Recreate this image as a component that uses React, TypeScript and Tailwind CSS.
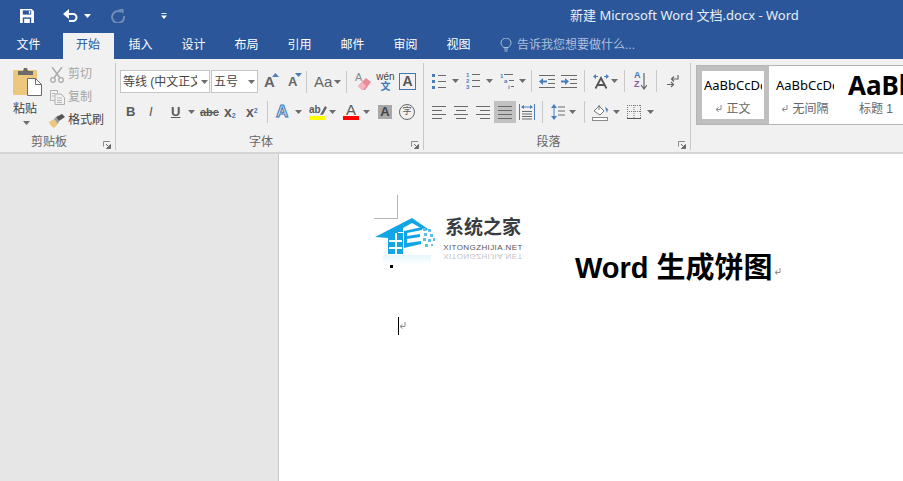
const blue = "#2b579a"

function Caret({ className = "" }: { className?: string }) {
  return (
    <svg width="7" height="4" viewBox="0 0 7 4" className={`shrink-0 ${className}`}>
      <path d="M0 0h7L3.500 4z" fill="#6d6d6d" />
    </svg>
  )
}

function Sep({ className = "" }: { className?: string }) {
  return <div className={`w-px shrink-0 bg-[#c8c8c8] ${className}`} />
}

function Launcher() {
  return (
    <svg width="8" height="8" viewBox="0 0 8 8" className="mr-[4px] ml-[5px] mb-[1px] shrink-0">
      <path d="M.5 5.500V.5H7" fill="none" stroke="#8a8a8a" />
      <path d="M3 3l3 3M7.500 3.500v4h-4z" stroke="#6b6b6b" fill="#6b6b6b" strokeWidth="1" />
    </svg>
  )
}

function Group({ label, className, children }: { label: string; className: string; children: React.ReactNode }) {
  return (
    <div className={`flex shrink-0 flex-col border-r border-[#c8c8c8] mt-[4px] mb-[2px] ${className}`}>
      <div className="flex-1 min-h-0">{children}</div>
      <div className="flex h-[16px] items-end">
        <div className="flex-1 text-center text-[12px] leading-[16px] text-[#666]">{label}</div>
        <Launcher />
      </div>
    </div>
  )
}

function Lines({ rows, className = "" }: { rows: [number, number][]; className?: string }) {
  return (
    <svg width="14" height="14" viewBox="0 0 14 14" className={`shrink-0 ${className}`}>
      {rows.map(([a, b], i) => (
        <rect key={i} x={a} y={i * 4 + 1} width={b - a} height="1" fill="#6a6a6a" />
      ))}
    </svg>
  )
}

function Save() {
  return (
    <svg width="14" height="14" viewBox="0 0 15 15" className="ml-[20px] shrink-0">
      <path d="M0 0h12.500L15 2.500V15H0z" fill="#fff" />
      <rect x="3" y="1.500" width="9" height="4.500" fill={blue} />
      <rect x="9.500" y="2" width="1.500" height="3" fill="#fff" />
      <rect x="3" y="9" width="9" height="6" fill={blue} />
      <rect x="4.500" y="10.500" width="6" height="4.500" fill="#fff" />
    </svg>
  )
}

function Undo() {
  return (
    <svg width="15" height="13" viewBox="0 0 15 13" className="ml-[29px] shrink-0">
      <path d="M2 5h8a3.500 3.500 0 0 1 0 7H6" fill="none" stroke="#fff" strokeWidth="2" />
      <path d="M6 0v10L0 5z" fill="#fff" />
    </svg>
  )
}

function Redo() {
  return (
    <svg width="14" height="14" viewBox="0 0 14 14" className="ml-[20px] shrink-0">
      <path d="M10 2.800A6 6 0 1 0 13 7" fill="none" stroke="#6f8bb8" strokeWidth="2" />
      <path d="M7.500 0h5v5z" fill="#6f8bb8" />
    </svg>
  )
}

function Customize() {
  return (
    <svg width="6" height="6" viewBox="0 0 7 7" className="ml-[36px] shrink-0">
      <rect x="0.500" y="0" width="6" height="1" fill="#fff" />
      <path d="M0 3h7L3.500 7z" fill="#fff" />
    </svg>
  )
}

function Bulb() {
  return (
    <svg width="12" height="14" viewBox="0 0 12 14" className="shrink-0">
      <path d="M3.500 9.500C2.500 8 1 7 1 5a5 5 0 0 1 10 0c0 2-1.500 3-2.500 4.500z" fill="none" stroke="#aebfdb" />
      <path d="M4 11h4M4.500 13h3" stroke="#aebfdb" />
    </svg>
  )
}

function Paste() {
  return (
    <svg width="29" height="29" viewBox="0 0 29 29" className="shrink-0">
      <rect x="0" y="3" width="24" height="25" rx="1" fill="#eec77e" />
      <path d="M5 4h5l1-3h3l1 3h5v4H5z" fill="#6b6b6b" />
      <path d="M14.500 11.500h8l6 6v11h-14z" fill="#fff" stroke="#6b6b6b" />
      <path d="M22.500 11.500v6h6" fill="none" stroke="#6b6b6b" />
    </svg>
  )
}

function Scissors() {
  return (
    <svg width="14" height="16" viewBox="0 0 14 16" className="shrink-0">
      <path d="M2 0l8 11M12 0L4 11" stroke="#ababab" strokeWidth="1.500" />
      <circle cx="3" cy="13" r="2.300" fill="none" stroke="#ababab" strokeWidth="1.300" />
      <circle cx="11" cy="13" r="2.300" fill="none" stroke="#ababab" strokeWidth="1.300" />
    </svg>
  )
}

function CopyIcon() {
  return (
    <svg width="15" height="15" viewBox="0 0 15 15" className="shrink-0">
      <path d="M.5.500h7v3M.5.500v10h4" fill="none" stroke="#b0b0b0" />
      <path d="M5 4h6l3.500 3.500v7H5z" fill="#f1f1f1" stroke="#b0b0b0" />
      <path d="M7 8h5M7 10.500h5M7 12.500h5M2 3.500h3M2 6h2" stroke="#b8b8b8" />
    </svg>
  )
}

function Brush() {
  return (
    <svg width="16" height="14" viewBox="0 0 16 14" className="shrink-0">
      <path d="M0 8l5-3 4 5-4 4C3 13 1 11 0 8z" fill="#eec77e" />
      <path d="M5 5l2-2 3 4-1 3z" fill="#9a9a9a" />
      <path d="M7 3l6-3 3 3-6 4z" fill="#555" />
    </svg>
  )
}

function Eraser() {
  return (
    <svg width="16" height="19" viewBox="0 0 16 19" className="shrink-0">
      <path d="M7 18l-4-4 8-8 5 4-6 8z" fill="#ec8a9b" />
      <path d="M3 14l4-4 4 4-3 4H7z" fill="#f3b6c0" />
    </svg>
  )
}

function Tri({ up = false }: { up?: boolean }) {
  return (
    <svg width="7" height="4" viewBox="0 0 7 4" className="absolute -top-[1px] -right-[2px]">
      <path d={up ? "M0 4h7L3.500 0z" : "M0 0h7L3.500 4z"} fill="#4a7ebb" />
    </svg>
  )
}

function Bullets() {
  return (
    <svg width="14" height="15" viewBox="0 0 14 15" className="shrink-0">
      {[1, 7, 13].map(y => (
        <g key={y}>
          <rect x="0" y={y - 1} width="3" height="3" fill="#4a7ebb" />
          <rect x="6" y={y} width="8" height="1" fill="#6a6a6a" />
        </g>
      ))}
    </svg>
  )
}

function Numbering() {
  return (
    <svg width="14" height="16" viewBox="0 0 14 16" className="shrink-0">
      {["1", "2", "3"].map((n, i) => (
        <g key={n}>
          <text x="0" y={i * 6 + 4} fontSize="6" fontWeight="700" fontFamily="Liberation Sans" fill="#4a7ebb">{n}</text>
          <rect x="6" y={i * 6 + 1} width="8" height="1" fill="#6a6a6a" />
        </g>
      ))}
    </svg>
  )
}

function Multi() {
  return (
    <svg width="14" height="16" viewBox="0 0 14 16" className="shrink-0">
      <text x="0" y="5" fontSize="6" fontWeight="700" fontFamily="Liberation Sans" fill="#4a7ebb">1</text>
      <rect x="4" y="1" width="9" height="1" fill="#6a6a6a" />
      <text x="4" y="10" fontSize="6" fontWeight="700" fontFamily="Liberation Sans" fill="#4a7ebb">a</text>
      <rect x="9" y="7" width="5" height="1" fill="#6a6a6a" />
      <text x="8" y="16" fontSize="6" fontWeight="700" fontFamily="Liberation Sans" fill="#4a7ebb">i</text>
      <rect x="11" y="13" width="3" height="1" fill="#6a6a6a" />
    </svg>
  )
}

function Indent({ flip = false }: { flip?: boolean }) {
  return (
    <svg width="16" height="13" viewBox="0 0 16 13" className="shrink-0">
      <path d="M0 .5h16M9 4.500h7M9 8.500h7M0 12.500h16" stroke="#6a6a6a" />
      {flip ? (
        <path d="M0 5.500h4V3l4 3.500L4 10V7.500H0z" fill="#4a7ebb" />
      ) : (
        <path d="M8 5.500H4V3L0 6.500 4 10V7.500h4z" fill="#4a7ebb" />
      )}
    </svg>
  )
}

function TextDir() {
  return (
    <svg width="16" height="15" viewBox="0 0 16 15" className="shrink-0">
      <path d="M2.500 14.500L8 4l5.500 10.500M5 11h6" fill="none" stroke="#555" strokeWidth="1.800" />
      <path d="M0 2.500L3 0v5zM16 2.500L13 0v5z" fill="#4a7ebb" />
      <path d="M2 2.500h3M11 2.500h3" stroke="#4a7ebb" />
    </svg>
  )
}

function Sort() {
  return (
    <svg width="13" height="17" viewBox="0 0 13 17" className="shrink-0">
      <path d="M10 0v15M7 12l3 4 3-4" fill="none" stroke="#666" strokeWidth="1.200" />
    </svg>
  )
}

function ParaMark() {
  return (
    <svg width="12" height="14" viewBox="0 0 12 14" className="shrink-0">
      <path d="M11 1v4H5M7 2.500L4.500 5 7 7.500" fill="none" stroke="#666" strokeWidth="1.200" />
      <path d="M0 10.500h6M4 8l2.500 2.500L4 13" fill="none" stroke="#666" strokeWidth="1.200" />
    </svg>
  )
}

function Distribute() {
  return (
    <svg width="16" height="16" viewBox="0 0 16 16" className="shrink-0">
      <path d="M.5 0v16M15.500 0v16" stroke="#4a7ebb" />
      <path d="M3 3h10" stroke="#4a7ebb" />
      <path d="M2 3l3-2v4zM14 3l-3-2v4z" fill="#4a7ebb" />
      <path d="M3 7.500h10M3 10h10M3 12.500h10M3 15h10" stroke="#6a6a6a" />
    </svg>
  )
}

function Spacing() {
  return (
    <svg width="14" height="16" viewBox="0 0 14 16" className="shrink-0">
      <path d="M3 2v12" stroke="#4a7ebb" />
      <path d="M0 4l3-4 3 4zM0 12l3 4 3-4z" fill="#4a7ebb" />
      <path d="M7 3h7M7 7h7M7 11h7" stroke="#6a6a6a" />
    </svg>
  )
}

function Shading() {
  return (
    <svg width="17" height="17" viewBox="0 0 17 17" className="shrink-0">
      <rect x=".5" y="13.500" width="15" height="3" fill="#fff" stroke="#8a8a8a" />
      <path d="M2 7l5-5 5 5-4 4z" fill="#fff" stroke="#777" />
      <path d="M7 1v5" stroke="#777" />
      <path d="M13 3l3 2-1 4z" fill="#4a7ebb" />
    </svg>
  )
}

function Borders() {
  return (
    <svg width="14" height="14" viewBox="0 0 14 14" className="shrink-0">
      <path d="M.5 0v13M13.500 0v13M0 .5h14M0 6.500h14M7 0v13" stroke="#777" strokeDasharray="1 1" />
      <path d="M0 13.500h14" stroke="#555" />
    </svg>
  )
}

function House() {
  return (
    <svg width="64" height="40" viewBox="0 0 64 40" className="shrink-0">
      <path d="M0 20L37 1l16 11-2 2-14-8-9 5v4l-5 0v20H13V21z" fill="#12a5e6" />
      <path d="M13 16h15v21H13z" fill="#12a5e6" />
      <path d="M20 16h2v21h-2zM14 23h13v2h-13zM14 30h13v2h-13z" fill="#fff" />
      <path d="M29 14l18-4v3l-15 3v3l13-2v3l-13 2v4l14-2v3l-17 4z" fill="#12a5e6" />
      <path d="M48 11h3v3h-3zM53 12h3v3h-3zM49 16h3v3h-3zM55 17h3v3h-3zM48 21h3v3h-3zM53 22h3v3h-3zM58 21h2v3h-2zM50 27h3v3h-3zM56 27h2v2h-2z" fill="#5cbfe8" />
    </svg>
  )
}

function Logo() {
  return (
    <div className="absolute left-[96px] top-[63px] flex w-[150px] items-start">
      <div className="flex flex-col">
        <House />
        <div className="ml-[8px] -mt-[2px] h-[9px] w-[48px] bg-gradient-to-b from-[#e6f6fd] to-white" />
      </div>
      <div className="ml-[4px] flex w-[80px] flex-col items-center">
        <div className="mt-[1px] text-[19px] leading-[20px] font-bold whitespace-nowrap text-[#3a3d40]">系统之家</div>
        <div className="mt-[5px] font-['Liberation_Sans',sans-serif] text-[8px] leading-[9px] tracking-[0.4px] whitespace-nowrap text-[#555]">XITONGZHIJIA.NET</div>
        <div className="scale-y-[-1] font-['Liberation_Sans',sans-serif] text-[8px] leading-[9px] tracking-[0.4px] whitespace-nowrap text-[#c4c4c4]">XITONGZHIJIA.NET</div>
      </div>
    </div>
  )
}

function ReturnMark({ className = "" }: { className?: string }) {
  return (
    <svg width="7" height="8" viewBox="0 0 7 8" className={`shrink-0 ${className}`}>
      <path d="M6 0v4.500H1.500M3.500 2.500L1 4.500l2.500 2" fill="none" stroke="#8a8a8a" />
    </svg>
  )
}

function StyleCard({ sample, name, selected }: { sample: string; name: string; selected?: boolean }) {
  return (
    <div className={`flex h-full w-[72px] shrink-0 flex-col items-center overflow-hidden border-[5px] ${selected ? "border-[#bfbfbf]" : "border-white"}`}>
      <div className="mt-[5px] h-[18px] w-[58px] overflow-hidden whitespace-nowrap font-['Noto_Sans',sans-serif] text-[13px] leading-[18px] text-black">{sample}</div>
      <div className="mt-[7px] flex items-center gap-[4px] text-[12px] leading-[16px] text-[#666]">
        <ReturnMark />
        {name}
      </div>
    </div>
  )
}

const tabs = ["插入", "设计", "布局", "引用", "邮件", "审阅", "视图"]

export default function App() {
  return (
    <div className="flex h-[481px] w-[903px] flex-col overflow-hidden bg-white font-['Liberation_Sans','Noto_Sans_CJK_SC',sans-serif]">
      <div className="flex h-[33px] shrink-0 items-center bg-[#2b579a] pb-[2px]">
        <Save />
        <Undo />
        <Caret className="ml-[6px] [&>path]:fill-white" />
        <Redo />
        <Customize />
        <div className="ml-[403px] font-['Noto_Sans','Noto_Sans_CJK_SC',sans-serif] text-[13px] whitespace-nowrap text-[#e9eef6]">新建 Microsoft Word 文档.docx - Word</div>
      </div>

      <div className="flex h-[26px] shrink-0 items-stretch bg-[#2b579a] text-[12px]">
        <div className="ml-[2px] flex w-[53px] items-center justify-center pb-[2px] text-white">文件</div>
        <div className="ml-[8px] flex w-[51px] items-center justify-center bg-[#f1f1f1] pr-[1px] pb-[2px] text-[#2b579a]">开始</div>
        <div className="flex">
          {tabs.map(t => (
            <div key={t} className="flex w-[53px] items-center justify-center pb-[2px] text-white">{t}</div>
          ))}
        </div>
        <div className="ml-[15px] flex items-center gap-[5px] pb-[2px] text-[#aebfdb]">
          <Bulb />
          告诉我您想要做什么...
        </div>
      </div>

      <div className="flex h-[95px] shrink-0 border-b-2 border-[#d4d4d4] bg-[#f1f1f1]">
        <Group label="剪贴板" className="w-[116px]">
          <div className="flex">
            <div className="ml-[13px] flex w-[28px] flex-col items-center pt-[4px]">
              <Paste />
              <div className="mt-[5px] -ml-[4px] text-[12px] leading-[16px] whitespace-nowrap text-[#444]">粘贴</div>
              <Caret className="mt-[4px] -ml-[1px]" />
            </div>
            <div className="ml-[9px] flex flex-col text-[12px] leading-[23px]">
              <div className="flex h-[23px] items-center gap-[4px] text-[#a6a6a6]"><Scissors />剪切</div>
              <div className="flex h-[23px] items-center gap-[3px] text-[#a6a6a6]"><CopyIcon />复制</div>
              <div className="-ml-[1px] flex h-[23px] items-center gap-[3px] text-[#444]"><Brush />格式刷</div>
            </div>
          </div>
        </Group>

        <Group label="字体" className="w-[308px]">
          <div className="mt-[6px] flex h-[24px] items-center pt-[1px]">
            <div className="ml-[4px] flex h-[23px] w-[90px] items-center border border-[#c6c6c6] bg-white pl-[2px] text-[12px] text-[#444]">
              <span className="w-[74px] overflow-hidden whitespace-nowrap">等线 (中文正文)</span>
              <Caret className="ml-[4px]" />
            </div>
            <div className="ml-[1px] flex h-[23px] w-[47px] items-center border border-[#c6c6c6] bg-white pl-[2px] text-[12px] text-[#444]">
              <span className="w-[34px]">五号</span>
              <Caret />
            </div>
            <div className="relative ml-[6px] w-[13px] text-[15px] leading-[16px] font-bold text-[#666]">A<Tri up /></div>
            <div className="relative ml-[11px] w-[12px] text-[13px] leading-[16px] font-bold text-[#666]">A<Tri /></div>
            <Sep className="ml-[6px] h-[22px]" />
            <div className="ml-[7px] w-[15px] text-[15px] leading-[18px] whitespace-nowrap text-[#666]">Aa</div>
            <Caret className="ml-[5px]" />
            <Sep className="ml-[5px] h-[22px]" />
            <div className="relative ml-[8px] h-[19px] w-[16px]">
              <span className="absolute -top-[3px] left-0 text-[11px] text-[#888]">A</span>
              <Eraser />
            </div>
            <div className="ml-[6px] flex w-[17px] flex-col items-center text-[10px] leading-[10px] text-[#444]">
              <span className="whitespace-nowrap">wén</span>
              <span className="font-bold text-[#3f78b5]">文</span>
            </div>
            <div className="ml-[5px] flex h-[17px] w-[17px] items-center justify-center border border-[#3f78b5] text-[14px] font-bold text-[#555]">A</div>
          </div>
          <div className="mt-[8px] flex h-[22px] items-center text-[#5a5a5a]">
            <span className="ml-[10px] w-[8px] text-[13px] font-bold">B</span>
            <span className="ml-[15px] w-[7px] text-[13px] italic">I</span>
            <span className="ml-[15px] w-[9px] text-[13px] font-bold underline">U</span>
            <Caret className="ml-[8px]" />
            <span className="ml-[5px] w-[17px] text-[11px] font-bold whitespace-nowrap line-through">abc</span>
            <span className="ml-[7px] w-[13px] text-[14px] font-bold whitespace-nowrap">x<sub className="text-[7px] text-[#3f78b5]">2</sub></span>
            <span className="ml-[9px] w-[13px] text-[14px] font-bold whitespace-nowrap">x<sup className="text-[7px] text-[#3f78b5]">2</sup></span>
            <Sep className="ml-[8px] h-[22px]" />
            <span className="ml-[8px] w-[15px] text-[17px] font-bold text-[#cfe1f5] [-webkit-text-stroke:1px_#3f78b5]">A</span>
            <Caret className="ml-[4px]" />
            <div className="ml-[7px] flex w-[16px] flex-col">
              <div className="flex h-[12px] items-center">
                <span className="text-[10px] leading-[12px] font-bold">ab</span>
                <svg width="7" height="11" viewBox="0 0 7 11" className="-ml-[1px] shrink-0">
                  <path d="M0 10L5 1l2 1.500-4 7z" fill="#666" />
                </svg>
              </div>
              <span className="h-[4px] bg-[#ffff00]" />
            </div>
            <Caret className="ml-[4px]" />
            <div className="ml-[7px] flex w-[16px] flex-col items-center">
              <span className="h-[12px] text-[15px] leading-[12px]">A</span>
              <span className="h-[4px] w-full bg-[#ff0000]" />
            </div>
            <Caret className="ml-[4px]" />
            <span className="ml-[8px] flex h-[14px] w-[14px] items-center justify-center bg-[#a8a8a8] text-[13px] font-bold text-[#444]">A</span>
            <span className="ml-[7px] flex h-[16px] w-[16px] items-center justify-center rounded-full border border-[#666] text-[9px]">字</span>
          </div>
        </Group>

        <Group label="段落" className="w-[267px]">
          <div className="mt-[6px] flex h-[24px] items-center">
            <div className="ml-[8px]"><Bullets /></div>
            <Caret className="ml-[6px]" />
            <div className="ml-[7px]"><Numbering /></div>
            <Caret className="ml-[6px]" />
            <div className="ml-[7px]"><Multi /></div>
            <Caret className="ml-[5px]" />
            <Sep className="ml-[5px] h-[22px]" />
            <div className="ml-[7px]"><Indent /></div>
            <div className="ml-[6px]"><Indent flip /></div>
            <Sep className="ml-[7px] h-[22px]" />
            <div className="ml-[8px]"><TextDir /></div>
            <Caret className="ml-[2px]" />
            <Sep className="ml-[6px] h-[22px]" />
            <div className="relative ml-[9px]">
              <Sort />
              <span className="absolute -top-[2px] left-0 flex flex-col text-[9px] leading-[9px] font-bold">
                <span className="text-[#3f78b5]">A</span>
                <span className="text-[#8a5aa8]">Z</span>
              </span>
            </div>
            <Sep className="ml-[9px] h-[22px]" />
            <div className="ml-[10px]"><ParaMark /></div>
          </div>
          <div className="mt-[8px] flex h-[22px] items-center">
            <Lines className="ml-[8px]" rows={[[0, 14], [0, 10], [0, 14], [0, 10]]} />
            <Lines className="ml-[8px]" rows={[[0, 14], [2, 12], [0, 14], [2, 12]]} />
            <Lines className="ml-[8px]" rows={[[0, 14], [4, 14], [0, 14], [4, 14]]} />
            <div className="ml-[4px] flex h-[22px] w-[22px] items-center justify-center bg-[#c1c1c1]">
              <Lines rows={[[0, 14], [0, 14], [0, 14], [0, 14]]} />
            </div>
            <div className="ml-[3px]"><Distribute /></div>
            <Sep className="ml-[7px] h-[22px]" />
            <div className="ml-[8px]"><Spacing /></div>
            <Caret className="ml-[4px]" />
            <Sep className="ml-[8px] h-[22px]" />
            <div className="ml-[7px]"><Shading /></div>
            <Caret className="ml-[4px]" />
            <div className="ml-[7px]"><Borders /></div>
            <Caret className="ml-[6px]" />
          </div>
        </Group>

        <div className="ml-[5px] mt-[6px] flex h-[60px] flex-1 border-y border-l border-[#b5b5b5] bg-white">
          <StyleCard selected sample="AaBbCcDd" name="正文" />
          <StyleCard sample="AaBbCcDd" name="无间隔" />
          <div className="flex flex-col items-start overflow-hidden">
            <div className="mt-[4px] ml-[7px] h-[30px] font-['Noto_Sans',sans-serif] text-[26px] leading-[30px] font-bold whitespace-nowrap text-black">AaBl</div>
            <div className="mt-[1px] ml-[18px] text-[12px] leading-[16px] whitespace-nowrap text-[#666]">标题 1</div>
          </div>
        </div>
      </div>

      <div className="flex min-h-0 flex-1">
        <div className="w-[279px] shrink-0 border-r border-[#c8c8c8] bg-[#e6e6e6]" />
        <div className="relative flex-1 bg-white">
          <div className="ml-[95px] mt-[41px] h-[24px] w-[24px] border-r border-b border-[#b5b5b5]" />
          <Logo />
          <div className="mt-[29px] flex h-[40px] items-center pl-[296px]">
            <span className="text-[29px] leading-[40px] font-bold whitespace-nowrap text-black">Word 生成饼图</span>
            <ReturnMark className="mt-[8px] ml-[1px]" />
          </div>
          <div className="ml-[119px] mt-[29px] flex h-[18px] items-center border-l border-black">
            <ReturnMark />
          </div>
          <div className="absolute left-[111px] top-[111px] h-[3px] w-[3px] bg-black" />
        </div>
      </div>
    </div>
  )
}
